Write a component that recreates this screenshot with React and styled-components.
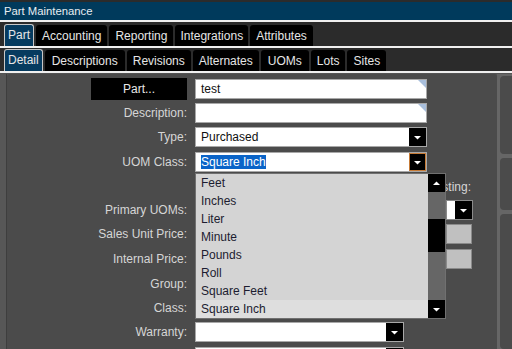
import React from 'react';
import styled, { createGlobalStyle } from 'styled-components';

const GlobalStyle = createGlobalStyle`
  html, body {
    margin: 0;
    padding: 0;
    background: #2b2b2b;
    overflow: hidden;
  }
  body {
    font-family: "Liberation Sans", Arial, sans-serif;
    font-size: 12px;
  }
`;

const Window = styled.div`
  width: 512px;
  height: 349px;
  display: flex;
  flex-direction: column;
  background: #2b2b2b;
  overflow: hidden;
`;

const TitleBar = styled.div`
  flex-shrink: 0;
  margin-top: 2px;
  height: 18px;
  background: #003a5c;
  color: #e8eef2;
  font-size: 11.3px;
  display: flex;
  align-items: center;
  padding-left: 4px;
  border-bottom: 2px solid #f0f0f0;
`;

const TabStrip = styled.div`
  flex-shrink: 0;
  display: flex;
  align-items: flex-end;
  gap: 2px;
  height: ${({ $h }) => $h}px;
  box-sizing: border-box;
  padding: 1px 0 0 4px;
  background: #2b2b2b;
  border-bottom: 2px solid #f0f0f0;
`;

const Tab = styled.div`
  height: ${({ $active }) => ($active ? '22px' : '21px')};
  padding: 0 ${({ $pad }) => $pad ?? 6}px;
  display: flex;
  align-items: ${({ $active }) => ($active ? 'flex-start' : 'center')};
  padding-top: ${({ $active }) => ($active ? '3px' : '0')};
  box-sizing: border-box;
  color: #e6e6e6;
  background: ${({ $active }) => ($active ? '#063b5f' : '#000')};
  border: ${({ $active }) => ($active ? '1px solid #c8c8c8' : 'none')};
  border-bottom: none;
  border-radius: 3px 3px 0 0;
  white-space: nowrap;
`;

const Body = styled.div`
  flex: 1;
  min-height: 0;
  display: flex;
  background: #555;
  padding-top: 1px;
`;

const Gutter = styled.div`
  width: 6px;
  background: #575757;
  border-right: 1px solid #3e3e3e;
`;

const MainPanel = styled.div`
  position: relative;
  flex: 0 0 490px;
  background: #4b4b4b;
  border-radius: 3px 3px 0 0;
  padding-top: 3px;
`;

const Divider = styled.div`
  width: 3px;
  background: #666;
`;

const SidePanels = styled.div`
  flex: 1;
  display: flex;
  flex-direction: column;
  gap: 4px;
  background: #666;
  padding-top: 2px;
`;

const SidePanel = styled.div`
  height: ${({ $h }) => $h}px;
  flex: ${({ $grow }) => ($grow ? 1 : 'none')};
  background: #4b4b4b;
  border-radius: 4px 0 0 4px;
`;

const Row = styled.div`
  display: grid;
  grid-template-columns: 188px 251px 27px;
  align-items: center;
  height: ${({ $h }) => $h}px;
`;

const Label = styled.div`
  grid-column: 1;
  text-align: right;
  padding-right: 8px;
  color: #d6d6d6;
  white-space: nowrap;
`;

const SideLabel = styled.div`
  grid-column: 3;
  display: flex;
  justify-content: flex-end;
  padding-right: 2px;
  color: #d6d6d6;
  white-space: nowrap;
`;

const PartButton = styled.div`
  justify-self: end;
  margin-right: 8px;
  width: 96px;
  height: 22px;
  background: #000;
  color: #e8e8e8;
  display: flex;
  align-items: center;
  justify-content: center;
`;

const TextBox = styled.div`
  grid-column: 2;
  position: relative;
  width: 232px;
  height: 20px;
  box-sizing: border-box;
  background: #fff;
  border: 1px solid #a8a8a8;
  color: #101010;
  display: flex;
  align-items: center;
  padding-left: 5px;
  &::after {
    content: '';
    position: absolute;
    top: 0;
    right: 0;
    border-style: solid;
    border-width: 0 8px 8px 0;
    border-color: transparent #a9bfdc transparent transparent;
  }
`;

const SelectBox = styled.div`
  grid-column: 2;
  height: 20px;
  width: ${({ $w }) => $w || 232}px;
  box-sizing: border-box;
  background: #fff;
  border: 1px solid #a8a8a8;
  color: #101010;
  display: flex;
  align-items: center;
  padding-left: 5px;
`;

const SelectValue = styled.span`
  flex: 1;
  white-space: nowrap;
  overflow: hidden;
`;

const Highlight = styled.span`
  background: #0a64c8;
  color: #fff;
  padding: 1px 0;
`;

const DropButton = styled.div`
  width: 17px;
  height: 18px;
  box-sizing: border-box;
  background: #000;
  border: ${({ $focus }) => ($focus ? '1px solid #c57a36' : 'none')};
  display: flex;
  align-items: center;
  justify-content: center;
`;

const Arrow = ({ up }) => (
  <svg width="7" height="5" viewBox="0 0 7 5">
    {up ? <path d="M0 4 L3.5 0.5 L7 4 Z" fill="#fff" /> : <path d="M0 1 L3.5 4.5 L7 1 Z" fill="#fff" />}
  </svg>
);

const GrayBox = styled.div`
  grid-column: 3;
  width: 26px;
  height: 20px;
  box-sizing: border-box;
  background: #c0c0c0;
  border: 1px solid #8a8a8a;
`;

const SideSelect = styled.div`
  grid-column: 3;
  width: 27px;
  height: 20px;
  box-sizing: border-box;
  border: 1px solid #8a8a8a;
  background: #fff;
  display: flex;
  justify-content: flex-end;
`;

const DropList = styled.div`
  position: absolute;
  left: 188px;
  top: 99px;
  width: 251px;
  height: 146px;
  box-sizing: border-box;
  border: 1px solid #707070;
  background: #d4d4d4;
  display: flex;
`;

const Options = styled.div`
  flex: 1;
  display: flex;
  flex-direction: column;
`;

const Option = styled.div`
  height: 18px;
  display: flex;
  align-items: center;
  padding-left: 5px;
  color: #1c1c30;
  background: ${({ $hover }) => ($hover ? '#dedede' : 'transparent')};
`;

const ScrollBar = styled.div`
  width: 17px;
  display: flex;
  flex-direction: column;
  background: #666;
`;

const ScrollButton = styled.div`
  height: 18px;
  background: #000;
  display: flex;
  align-items: center;
  justify-content: center;
`;

const Thumb = styled.div`
  height: 33px;
  margin-top: 27px;
  background: #000;
`;

const Spacer = styled.div`
  flex: 1;
`;

const uoms = ['Feet', 'Inches', 'Liter', 'Minute', 'Pounds', 'Roll', 'Square Feet', 'Square Inch'];

const Select = ({ value, focus, width, children }) => (
  <SelectBox $w={width}>
    <SelectValue>{children || value}</SelectValue>
    <DropButton $focus={focus}>
      <Arrow />
    </DropButton>
  </SelectBox>
);

export default function App() {
  return (
    <>
      <GlobalStyle />
      <Window>
        <TitleBar>Part Maintenance</TitleBar>
        <TabStrip $h={26}>
          <Tab $active $pad={3}>Part</Tab>
          <Tab>Accounting</Tab>
          <Tab>Reporting</Tab>
          <Tab $pad={5}>Integrations</Tab>
          <Tab>Attributes</Tab>
        </TabStrip>
        <TabStrip $h={25}>
          <Tab $active $pad={3}>Detail</Tab>
          <Tab $pad={7}>Descriptions</Tab>
          <Tab>Revisions</Tab>
          <Tab>Alternates</Tab>
          <Tab $pad={7}>UOMs</Tab>
          <Tab>Lots</Tab>
          <Tab>Sites</Tab>
        </TabStrip>
        <Body>
          <Gutter />
          <MainPanel>
            <Row $h={24}>
              <PartButton>Part...</PartButton>
              <TextBox>test</TextBox>
            </Row>
            <Row $h={24}>
              <Label>Description:</Label>
              <TextBox />
            </Row>
            <Row $h={24}>
              <Label>Type:</Label>
              <Select value="Purchased" />
            </Row>
            <Row $h={26}>
              <Label>UOM Class:</Label>
              <Select focus>
                <Highlight>Square Inch</Highlight>
              </Select>
            </Row>
            <Row $h={24}>
              <SideLabel>Costing:</SideLabel>
            </Row>
            <Row $h={22}>
              <Label>Primary UOMs:</Label>
              <SideSelect>
                <DropButton>
                  <Arrow />
                </DropButton>
              </SideSelect>
            </Row>
            <Row $h={26}>
              <Label>Sales Unit Price:</Label>
              <GrayBox />
            </Row>
            <Row $h={24}>
              <Label>Internal Price:</Label>
              <GrayBox />
            </Row>
            <Row $h={26}>
              <Label>Group:</Label>
            </Row>
            <Row $h={22}>
              <Label>Class:</Label>
            </Row>
            <Row $h={26}>
              <Label>Warranty:</Label>
              <Select width={209} value="" />
            </Row>
            <Row $h={24}>
              <Select width={209} value="" />
            </Row>
            <DropList>
              <Options>
                {uoms.map((u) => (
                  <Option key={u} $hover={u === 'Square Inch'}>{u}</Option>
                ))}
              </Options>
              <ScrollBar>
                <ScrollButton><Arrow up /></ScrollButton>
                <Thumb />
                <Spacer />
                <ScrollButton><Arrow /></ScrollButton>
              </ScrollBar>
            </DropList>
          </MainPanel>
          <Divider />
          <SidePanels>
            <SidePanel $h={78} />
            <SidePanel $h={52} />
            <SidePanel $grow />
          </SidePanels>
        </Body>
      </Window>
    </>
  );
}
